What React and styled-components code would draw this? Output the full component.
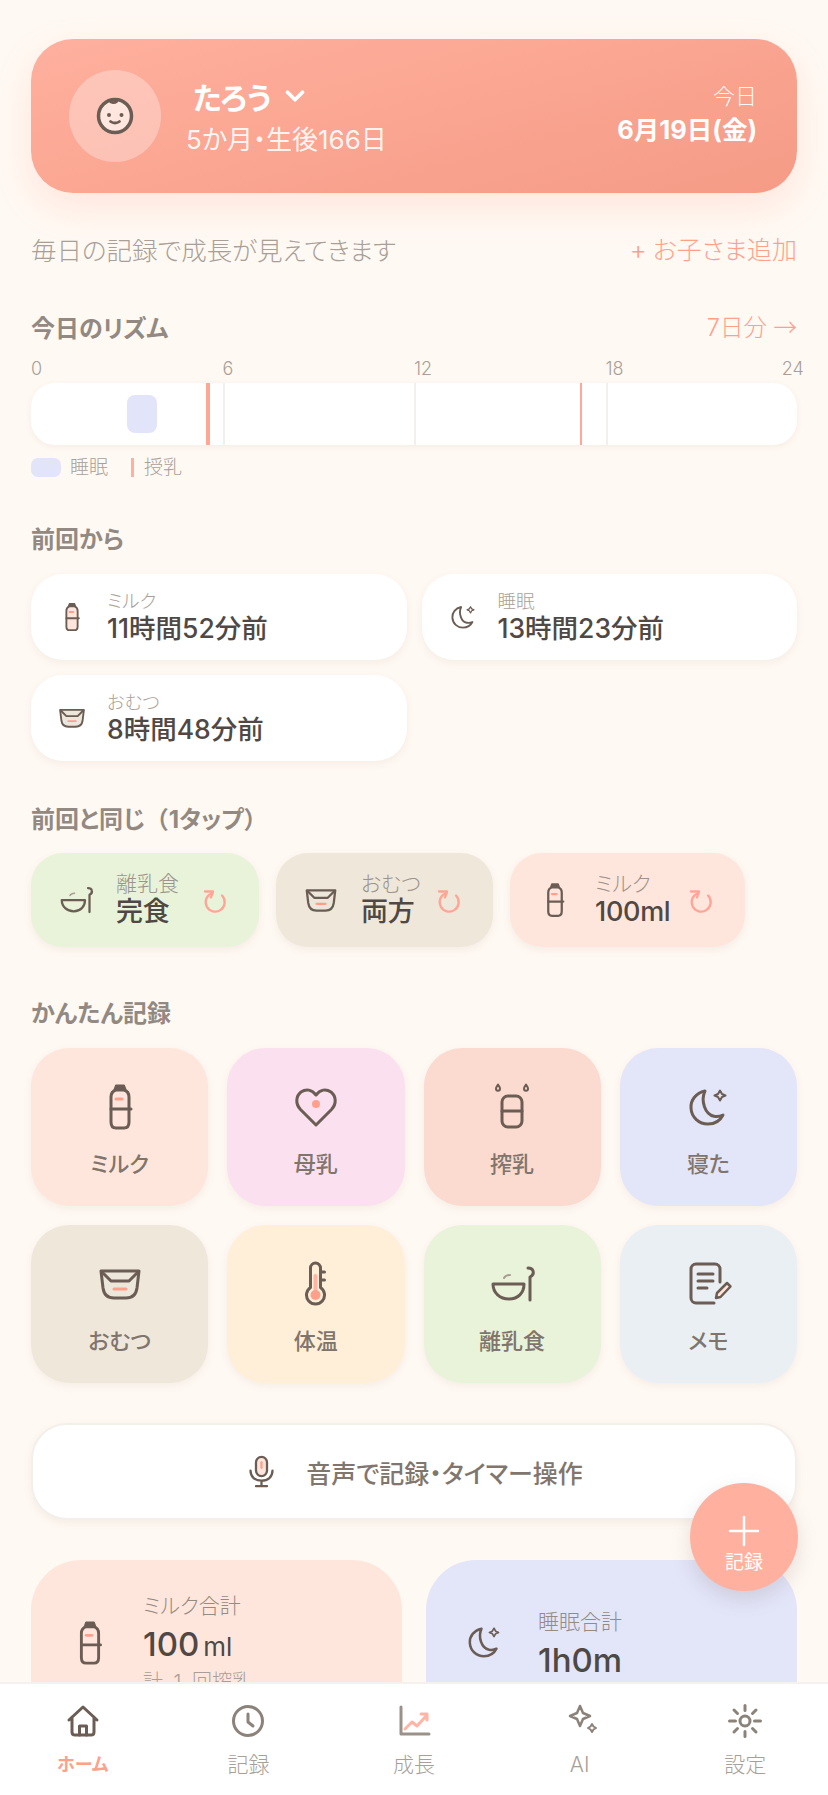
import React from 'react';
import styled, { createGlobalStyle } from 'styled-components';
import { ChevronDown } from 'lucide-react';

const INK = '#6b5d54';
const CORAL = '#ffa08c';
const MUTED = '#a89f98';

const GlobalStyle = createGlobalStyle`
  html, body {
    margin: 0;
    padding: 0;
    background: #fff9f3;
  }
  * {
    box-sizing: border-box;
  }
  body {
    font-family: "Inter", "Noto Sans CJK JP", "Noto Sans", sans-serif;
    font-feature-settings: "palt";
  }
`;

const Screen = styled.div`
  position: relative;
  height: 100vh;
  display: flex;
  flex-direction: column;
  overflow: hidden;
  background: #fff9f3;
`;

const Main = styled.main`
  flex: 1;
  min-height: 0;
  overflow: hidden;
  padding: 39px 31px 0;
`;

// full-width punctuation keeps its em box in the reference
const FullWidth = styled.span`
  font-family: "Noto Sans CJK JP", sans-serif;
  font-feature-settings: normal;
`;

const Hero = styled.section`
  height: 154px;
  border-radius: 42px;
  padding: 0 40px 0 38px;
  display: flex;
  align-items: center;
  background: linear-gradient(165deg, #ffb09e 0%, #f59b86 100%);
  box-shadow: 0 14px 36px rgba(255, 165, 140, 0.22);
  color: #fff;
`;

const Avatar = styled.div`
  width: 92px;
  height: 92px;
  border-radius: 50%;
  background: rgba(255, 255, 255, 0.3);
  display: flex;
  align-items: center;
  justify-content: center;
  flex-shrink: 0;
`;

const HeroText = styled.div`
  margin-left: 25px;
  padding-top: 4px;
  flex: 1;
`;

const NameRow = styled.div`
  display: flex;
  align-items: center;
  gap: 8px;
  margin-left: 7px;
  height: 38px;
  font-size: 30px;
  font-weight: 700;
`;

const Age = styled.div`
  margin-top: 5px;
  font-size: 26px;
  line-height: 40px;
  color: rgba(255, 255, 255, 0.9);
`;

const HeroDate = styled.div`
  text-align: right;
  padding-bottom: 4px;
`;

const TodayLabel = styled.div`
  font-size: 22px;
  line-height: 32px;
  font-weight: 300;
  color: rgba(255, 255, 255, 0.95);
`;

const TodayValue = styled.div`
  font-size: 25.5px;
  line-height: 36px;
  font-weight: 700;
`;

const SubRow = styled.div`
  margin-top: 39px;
  height: 36px;
  padding-bottom: 4px;
  display: flex;
  align-items: center;
  justify-content: space-between;
`;

const Hint = styled.span`
  font-size: 25.5px;
  font-weight: 300;
  color: ${MUTED};
`;

const AddChild = styled.span`
  font-size: 25px;
  font-weight: 300;
  color: ${CORAL};
`;

const AddPlus = styled.span`
  margin-right: 6px;
  font-size: 26px;
`;

const SectionHead = styled.div`
  margin-top: ${p => p.$top}px;
  height: 30px;
  padding-bottom: 2px;
  display: flex;
  align-items: center;
  justify-content: space-between;
`;

const SectionTitle = styled.h2`
  margin: 0;
  font-size: 24px;
  font-weight: 700;
  color: #928a82;
`;

const MoreLink = styled.span`
  font-size: 23.5px;
  font-weight: 300;
  color: ${CORAL};
`;

const Axis = styled.div`
  position: relative;
  margin-top: 16px;
  height: 22px;
`;

const AxisLabel = styled.span`
  position: absolute;
  left: ${p => p.$at}%;
  top: 0;
  font-size: 18px;
  font-weight: 300;
  line-height: 22px;
  color: ${MUTED};
`;

const RhythmBar = styled.div`
  position: relative;
  margin-top: 3px;
  height: 62px;
  border-radius: 24px;
  background: #fff;
  box-shadow: 0 2px 6px rgba(120, 90, 70, 0.07);
  overflow: hidden;
`;

const Tick = styled.i`
  position: absolute;
  top: 0;
  bottom: 0;
  left: ${p => p.$at}%;
  width: 2px;
  background: #f2efec;
`;

const SleepBlock = styled.i`
  position: absolute;
  top: 12px;
  bottom: 12px;
  left: ${p => p.$at}%;
  width: ${p => p.$len}%;
  border-radius: 8px;
  background: #e2e4f9;
`;

const FeedLine = styled.i`
  position: absolute;
  top: 0;
  bottom: 0;
  left: ${p => p.$at}%;
  width: ${p => p.$w}px;
  background: #ffa896;
`;

const Legend = styled.div`
  margin-top: 13px;
  height: 19px;
  display: flex;
  align-items: center;
`;

const LegendText = styled.span`
  margin-top: -4px;
  font-size: 19px;
  font-weight: 300;
  color: ${MUTED};
`;

const SleepSwatch = styled.i`
  width: 30px;
  height: 19px;
  border-radius: 7px;
  background: #e2e4f9;
  margin-right: 9px;
`;

const FeedSwatch = styled.i`
  width: 3px;
  height: 19px;
  background: #ffb09e;
  margin-left: 23px;
  margin-right: 10px;
`;

const SinceGrid = styled.div`
  margin-top: 21px;
  display: grid;
  grid-template-columns: 1fr 1fr;
  gap: 15px;
`;

const SinceCard = styled.div`
  height: 86px;
  border-radius: 32px;
  background: #fff;
  box-shadow: 0 3px 8px rgba(120, 90, 70, 0.07);
  display: flex;
  align-items: center;
  padding-left: 26px;
  gap: 20px;
`;

const StackText = styled.div`
  display: flex;
  flex-direction: column;
`;

const SmallLabel = styled.span`
  font-size: 18.5px;
  line-height: 20px;
  font-weight: 300;
  color: ${MUTED};
`;

const TimeValue = styled.span`
  margin-top: 2px;
  font-size: 26.5px;
  line-height: 30px;
  font-weight: 500;
  color: #4f4844;
`;

const ChipRow = styled.div`
  margin-top: 20px;
  display: flex;
  gap: 17px;
`;

const Chip = styled.div`
  width: ${p => p.$w}px;
  height: 94px;
  border-radius: 32px;
  background: ${p => p.$bg};
  box-shadow: 0 3px 8px rgba(120, 90, 70, 0.08);
  display: flex;
  align-items: center;
  padding: 0 32px 0 27px;
`;

const ChipText = styled(StackText)`
  flex: 1;
  margin-left: 22px;
`;

const ChipLabel = styled.span`
  font-size: 21px;
  line-height: 24px;
  font-weight: 300;
  color: #9c948c;
`;

const ChipValue = styled.span`
  font-size: 27px;
  line-height: 32px;
  font-weight: 500;
  letter-spacing: -0.3px;
  color: #4f4844;
`;

const QuickGrid = styled.div`
  margin-top: 21px;
  display: grid;
  grid-template-columns: repeat(4, 1fr);
  gap: 19px;
`;

const QuickCard = styled.div`
  height: 158px;
  border-radius: 38px;
  background: ${p => p.$bg};
  box-shadow: 0 3px 8px rgba(120, 90, 70, 0.07);
  display: flex;
  flex-direction: column;
  align-items: center;
  padding-top: 35px;
`;

const QuickLabel = styled.span`
  margin-top: 17px;
  font-size: 22px;
  line-height: 32px;
  font-weight: 500;
  color: #80756d;
`;

const VoiceButton = styled.div`
  margin-top: 40px;
  height: 97px;
  border-radius: 36px;
  border: 2px solid #f3efeb;
  background: #fff;
  box-shadow: 0 3px 8px rgba(120, 90, 70, 0.08);
  display: flex;
  align-items: center;
  justify-content: center;
  gap: 28px;
  font-size: 25px;
  font-weight: 500;
  color: #80766e;
`;

const StatGrid = styled.div`
  margin-top: 40px;
  display: grid;
  grid-template-columns: 371px 371px;
  justify-content: space-between;
`;

const StatCard = styled.div`
  height: 180px;
  border-radius: 50px;
  background: ${p => p.$bg};
  display: flex;
  align-items: flex-start;
  padding-left: ${p => p.$pad}px;
  padding-top: ${p => p.$top}px;
`;

const StatIcon = styled.div`
  margin-top: ${p => p.$top}px;
  flex-shrink: 0;
  display: flex;
`;

const StatText = styled(StackText)`
  margin-left: ${p => p.$gap}px;
`;

const StatLabel = styled.span`
  font-size: 21px;
  line-height: 30px;
  font-weight: 300;
  color: #948b83;
`;

const StatValue = styled.span`
  font-size: 33px;
  line-height: 46px;
  font-weight: 500;
  color: #4f4844;
`;

const StatUnit = styled.span`
  font-size: 26px;
  font-weight: 400;
  margin-left: 4px;
`;

const StatNote = styled.span`
  font-size: 20px;
  line-height: 24px;
  font-weight: 300;
  word-spacing: 5px;
  color: ${MUTED};
`;

const Fab = styled.div`
  position: absolute;
  left: 690px;
  top: 1483px;
  width: 108px;
  height: 108px;
  border-radius: 50%;
  background: #ffb09e;
  box-shadow: 0 8px 20px rgba(120, 110, 110, 0.2);
  display: flex;
  flex-direction: column;
  align-items: center;
  padding-top: 32px;
  color: #fff;
  font-size: 19px;
  line-height: 24px;
  gap: 4px;
`;

const Nav = styled.nav`
  height: 113px;
  flex-shrink: 0;
  background: #fff;
  border-top: 2px solid #f4f1ee;
  display: grid;
  grid-template-columns: repeat(5, 1fr);
`;

const NavItem = styled.div`
  display: flex;
  flex-direction: column;
  align-items: center;
  padding-top: 20px;
`;

const NavLabel = styled.span`
  margin-top: 13px;
  font-size: ${p => (p.$active ? 18 : 21)}px;
  line-height: 28px;
  font-weight: ${p => (p.$active ? 700 : 300)};
  color: ${p => (p.$active ? CORAL : MUTED)};
`;

const Glyph = styled.svg`
  display: block;
  flex-shrink: 0;
  fill: none;
  overflow: visible;
  stroke: ${p => p.$stroke || INK};
  stroke-width: ${p => p.$weight || 3};
  stroke-linecap: round;
  stroke-linejoin: round;
`;

const Icon = ({ size = 48, stroke, weight, box = 48, children }) => (
  <Glyph width={size} height={size} viewBox={`0 0 ${box} ${box}`} $stroke={stroke} $weight={weight}>
    {children}
  </Glyph>
);

const BottleIcon = ({ size }) => (
  <Icon size={size}>
    <path d="M15 14c0-4 2-6 5-7h8c3 1 5 3 5 7v25c0 4-2 6-5 6h-8c-3 0-5-2-5-6z" fill="#ffe5dc" />
    <path d="M20 2.500h8l1.500 4h-11z" fill={INK} strokeWidth="2" />
    <path d="M15 26h20" />
    <path d="M20 16h6" stroke={CORAL} />
  </Icon>
);

const HeartIcon = ({ size }) => (
  <Icon size={size}>
    <path d="M24 42 8.500 26.500C3 20.500 4 13 9 9c5-3.500 11-2.500 15 3 4-5.500 10-6.500 15-3 5 4 6 11.500.5 17.500z" />
    <circle cx="24" cy="21" r="4" fill={CORAL} stroke="none" />
  </Icon>
);

const PumpIcon = ({ size }) => (
  <Icon size={size}>
    <path d="M10 1.500c1.500 2 2 3 2 4.200a2 2 0 0 1-4 0c0-1.200.5-2.200 2-4.200z" strokeWidth="2" />
    <path d="M38 1.500c1.500 2 2 3 2 4.200a2 2 0 0 1-4 0c0-1.200.5-2.200 2-4.200z" strokeWidth="2" />
    <rect x="14" y="13" width="20" height="31" rx="6" />
    <path d="M14 28h20" />
  </Icon>
);

const MoonIcon = ({ size }) => (
  <Icon size={size}>
    <path d="M21 8C12 10 6.500 17 7 25c.5 9.500 8 16 17 16 6.500 0 12-3 15-9-3 1.500-6 1.800-9 1.200C21 31.500 16.500 18 21 8z" />
    <path d="M36 7.500 38 11l3.500 1.500L38 14l-2 3.500-2-3.500-3.500-1.500L34 11z" strokeWidth="2" />
  </Icon>
);

const DiaperIcon = ({ size }) => (
  <Icon size={size}>
    <path d="M5 11h38l-2 17c-1 7-5 10-11 10H18c-6 0-10-3-11-10z" fill="#ede6da" />
    <path d="M6 12l9 9h18l9-9" />
    <path d="M18 29h12" stroke={CORAL} />
  </Icon>
);

const ThermoIcon = ({ size }) => (
  <Icon size={size}>
    <path d="M18.500 8a5 5 0 0 1 10 0v19.500a9 9 0 1 1-10 0z" />
    <path d="M28.500 12h4M28.500 20h4" />
    <path d="M23.500 16v14" stroke="#ffb5a5" strokeWidth="4" />
    <circle cx="23.500" cy="35" r="5" fill={CORAL} stroke="none" />
  </Icon>
);

const BowlIcon = ({ size }) => (
  <Icon size={size}>
    <path d="M5 24h31c0 9-6 15-15 15S5 33 5 24z" />
    <path d="M42 40V17c2-1 4-3 3-6-.5-2-2-3-5-3" />
    <path d="M16 18c1-2 3-3 6-3" strokeWidth="2" stroke="#a89c92" />
  </Icon>
);

const MemoIcon = ({ size }) => (
  <Icon size={size}>
    <path d="M36 22V9a5 5 0 0 0-5-5H12a5 5 0 0 0-5 5v29a5 5 0 0 0 5 5h18" />
    <path d="M14 14h15M14 21h15M14 28h9" />
    <path d="M32 38l1-5 10-10 3.500 3.500L36.500 37z" fill="#ffe5dc" strokeWidth="2.500" />
  </Icon>
);

const RedoIcon = () => (
  <Icon size={24} box={24} stroke="#ffa596" weight={2.300}>
    <path d="M19 7.500A9.500 9.500 0 1 1 9.500 5" />
    <path d="M2 3.500h8l-2 6" />
  </Icon>
);

const FaceIcon = () => (
  <Icon size={38} box={38}>
    <circle cx="19" cy="19" r="16.500" fill="#ffe6de" strokeWidth="3.500" />
    <path d="M13.500 3.500c2 2.500 5 2.500 7 1" strokeWidth="3" />
    <circle cx="13" cy="18" r="2" fill={INK} stroke="none" />
    <circle cx="25.500" cy="18" r="2" fill={INK} stroke="none" />
    <path d="M14.500 24.500c2.500 2 6.500 2 9 0" strokeWidth="2.800" />
  </Icon>
);

const MicIcon = () => (
  <Icon size={33} box={36} weight={2.500}>
    <rect x="12" y="2" width="12" height="21" rx="6" fill="#ffe5dc" />
    <path d="M18 8v6" stroke={CORAL} />
    <path d="M6 17c0 7 5 11 12 11s12-4 12-11M18 28v6M12 34h12" />
  </Icon>
);

const PlusIcon = () => (
  <Icon size={32} box={32} stroke="#fff" weight={2.500}>
    <path d="M16 2v28M2 16h28" />
  </Icon>
);

const HomeIcon = () => (
  <Icon size={34} box={34}>
    <path d="M3 16 17 3l14 13M6 13v15c0 2 1 3 3 3h16c2 0 3-1 3-3V13" />
    <path d="M13.500 31v-9h7v9" />
  </Icon>
);

const ClockIcon = () => (
  <Icon size={34} box={34} stroke="#8b827a">
    <circle cx="17" cy="17" r="14.500" />
    <path d="M17 10v8l5 4" />
  </Icon>
);

const ChartIcon = () => (
  <Icon size={34} box={34} stroke="#9a9189">
    <path d="M4 3v27h28" />
    <path d="M8 25l7-7 5 4 10-11M24 10h6v6" stroke="#ffb5a5" />
  </Icon>
);

const SparkleIcon = () => (
  <Icon size={34} box={34} stroke="#8b827a" weight={2.500}>
    <path d="M17 2l3 7 7 3-7 3-3 7-3-7-7-3 7-3z" />
    <path d="M29 20l1.500 2.500L33 24l-2.500 1.500L29 28l-1.500-2.500L25 24l2.500-1.500z" strokeWidth="2" />
  </Icon>
);

const SunIcon = () => (
  <Icon size={34} box={34} stroke="#8b827a">
    <circle cx="17" cy="17" r="5" />
    <path d="M17 1.500v5M17 27.500v5M1.500 17h6M26.500 17h6M6 6l3.500 3.500M24.500 24.500 28 28M6 28l3.500-3.500M24.500 9.500 28 6" />
  </Icon>
);

const since = [
  { icon: <BottleIcon size={30} />, label: 'ミルク', value: '11時間52分前' },
  { icon: <MoonIcon size={30} />, label: '睡眠', value: '13時間23分前' },
  { icon: <DiaperIcon size={30} />, label: 'おむつ', value: '8時間48分前' },
];

const repeats = [
  { icon: <BowlIcon size={36} />, label: '離乳食', value: '完食', bg: '#e8f3da', w: 228 },
  { icon: <DiaperIcon size={36} />, label: 'おむつ', value: '両方', bg: '#eee7da', w: 217 },
  { icon: <BottleIcon size={36} />, label: 'ミルク', value: '100ml', bg: '#ffe6dd', w: 235 },
];

const quick = [
  { icon: <BottleIcon />, label: 'ミルク', bg: '#ffe6dd' },
  { icon: <HeartIcon />, label: '母乳', bg: '#fbe1ef' },
  { icon: <PumpIcon />, label: '搾乳', bg: '#fbdacf' },
  { icon: <MoonIcon />, label: '寝た', bg: '#e3e5f9' },
  { icon: <DiaperIcon />, label: 'おむつ', bg: '#eee7da' },
  { icon: <ThermoIcon />, label: '体温', bg: '#ffefd8' },
  { icon: <BowlIcon />, label: '離乳食', bg: '#e8f3da' },
  { icon: <MemoIcon />, label: 'メモ', bg: '#eaeff4' },
];

const tabs = [
  { icon: <HomeIcon />, label: 'ホーム', active: true },
  { icon: <ClockIcon />, label: '記録' },
  { icon: <ChartIcon />, label: '成長' },
  { icon: <SparkleIcon />, label: 'AI' },
  { icon: <SunIcon />, label: '設定' },
];

export default function App() {
  return (
    <Screen>
      <GlobalStyle />
      <Main>
        <Hero>
          <Avatar>
            <FaceIcon />
          </Avatar>
          <HeroText>
            <NameRow>
              たろう
              <ChevronDown size={30} strokeWidth={3} />
            </NameRow>
            <Age>5か月・生後166日</Age>
          </HeroText>
          <HeroDate>
            <TodayLabel>今日</TodayLabel>
            <TodayValue>6月19日(金)</TodayValue>
          </HeroDate>
        </Hero>

        <SubRow>
          <Hint>毎日の記録で成長が見えてきます</Hint>
          <AddChild>
            <AddPlus>+</AddPlus>お子さま追加
          </AddChild>
        </SubRow>

        <SectionHead $top={44}>
          <SectionTitle>今日のリズム</SectionTitle>
          <MoreLink>
            7日分 <FullWidth>→</FullWidth>
          </MoreLink>
        </SectionHead>
        <Axis>
          <AxisLabel $at={0}>0</AxisLabel>
          <AxisLabel $at={25}>6</AxisLabel>
          <AxisLabel $at={50}>12</AxisLabel>
          <AxisLabel $at={75}>18</AxisLabel>
          <AxisLabel $at={98}>24</AxisLabel>
        </Axis>
        <RhythmBar>
          <Tick $at={25} />
          <Tick $at={50} />
          <Tick $at={75} />
          <SleepBlock $at={12.5} $len={4} />
          <FeedLine $at={22.8} $w={4} />
          <FeedLine $at={71.7} $w={2} />
        </RhythmBar>
        <Legend>
          <SleepSwatch />
          <LegendText>睡眠</LegendText>
          <FeedSwatch />
          <LegendText>授乳</LegendText>
        </Legend>

        <SectionHead $top={46}>
          <SectionTitle>前回から</SectionTitle>
        </SectionHead>
        <SinceGrid>
          {since.map(item => (
            <SinceCard key={item.label}>
              {item.icon}
              <StackText>
                <SmallLabel>{item.label}</SmallLabel>
                <TimeValue>{item.value}</TimeValue>
              </StackText>
            </SinceCard>
          ))}
        </SinceGrid>

        <SectionHead $top={42}>
          <SectionTitle>
            前回と同じ<FullWidth>（</FullWidth>1タップ<FullWidth>）</FullWidth>
          </SectionTitle>
        </SectionHead>
        <ChipRow>
          {repeats.map(item => (
            <Chip key={item.label} $bg={item.bg} $w={item.w}>
              {item.icon}
              <ChipText>
                <ChipLabel>{item.label}</ChipLabel>
                <ChipValue>{item.value}</ChipValue>
              </ChipText>
              <RedoIcon />
            </Chip>
          ))}
        </ChipRow>

        <SectionHead $top={50}>
          <SectionTitle>かんたん記録</SectionTitle>
        </SectionHead>
        <QuickGrid>
          {quick.map(item => (
            <QuickCard key={item.label} $bg={item.bg}>
              {item.icon}
              <QuickLabel>{item.label}</QuickLabel>
            </QuickCard>
          ))}
        </QuickGrid>

        <VoiceButton>
          <MicIcon />
          音声で記録・タイマー操作
        </VoiceButton>

        <StatGrid>
          <StatCard $bg="#ffe6dd" $pad={36} $top={31}>
            <StatIcon $top={29}>
              <BottleIcon size={46} />
            </StatIcon>
            <StatText $gap={30}>
              <StatLabel>ミルク合計</StatLabel>
              <StatValue>
                100<StatUnit>ml</StatUnit>
              </StatValue>
              <StatNote>計 1 回搾乳</StatNote>
            </StatText>
          </StatCard>
          <StatCard $bg="#e3e5f9" $pad={38} $top={47}>
            <StatIcon $top={15}>
              <MoonIcon size={40} />
            </StatIcon>
            <StatText $gap={34}>
              <StatLabel>睡眠合計</StatLabel>
              <StatValue>1h0m</StatValue>
            </StatText>
          </StatCard>
        </StatGrid>
      </Main>

      <Fab>
        <PlusIcon />
        記録
      </Fab>

      <Nav>
        {tabs.map(tab => (
          <NavItem key={tab.label}>
            {tab.icon}
            <NavLabel $active={tab.active}>{tab.label}</NavLabel>
          </NavItem>
        ))}
      </Nav>
    </Screen>
  );
}
